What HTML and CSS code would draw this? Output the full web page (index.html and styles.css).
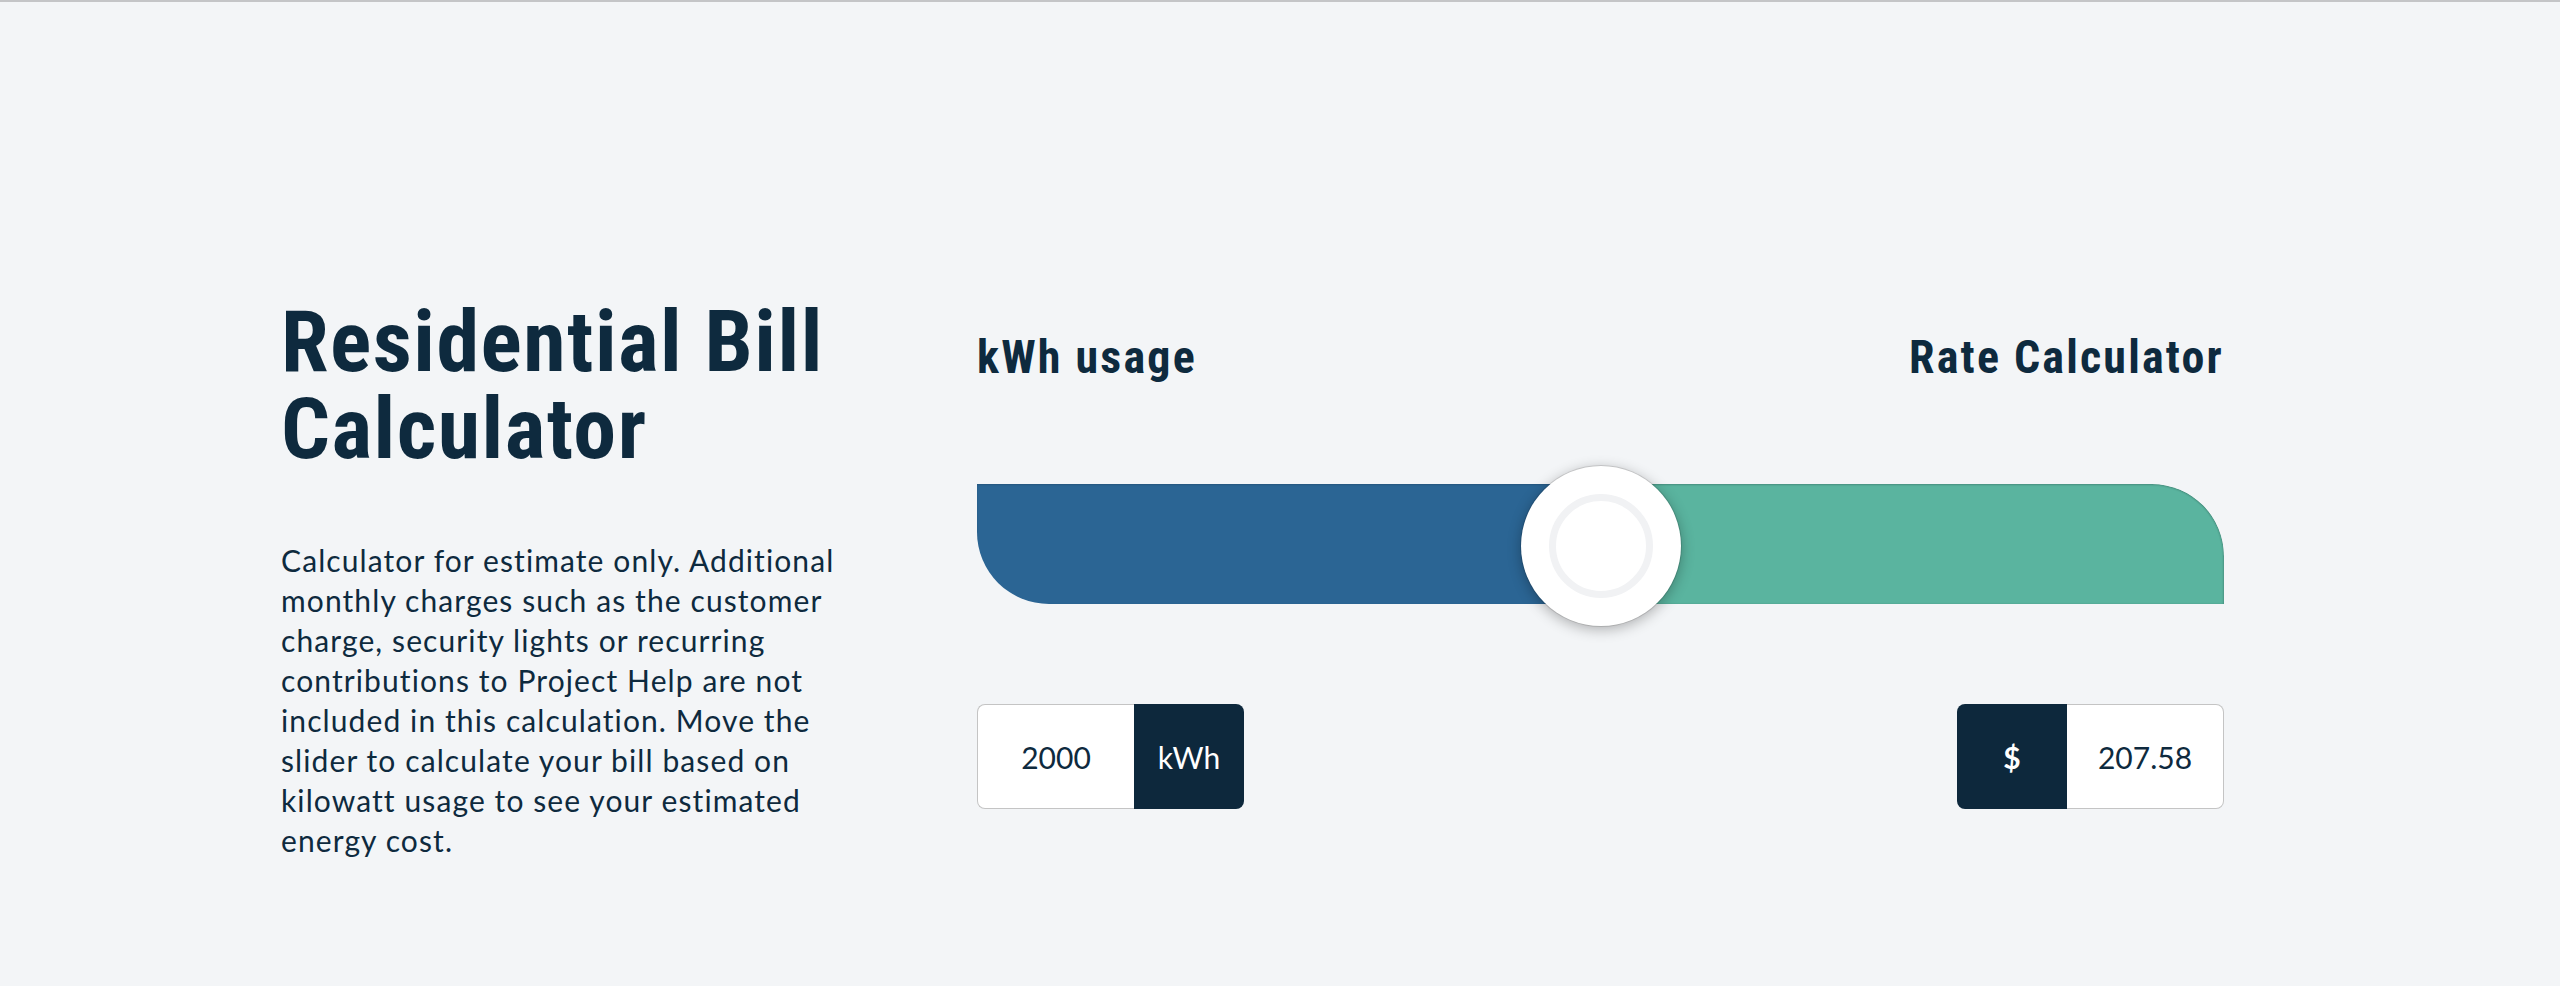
FILE: index.html
```html
<!DOCTYPE html>
<html lang="en">
<head>
<meta charset="utf-8">
<title>Residential Bill Calculator</title>
<link rel="stylesheet" href="styles.css">
</head>
<body>
<main class="page">
  <section class="calc">
    <div class="intro">
      <h1 class="title">Residential Bill Calculator</h1>
      <p class="desc">Calculator for estimate only. Additional monthly charges such as the customer charge, security lights or recurring contributions to Project Help are not included in this calculation. Move the slider to calculate your bill based on kilowatt usage to see your estimated energy cost.</p>
    </div>
    <div class="tool">
      <div class="labels">
        <h2 class="label">kWh usage</h2>
        <h2 class="label">Rate Calculator</h2>
      </div>
      <div class="slider">
        <div class="bar">
          <div class="bar-left" style="width:50%"></div>
          <div class="bar-right"></div>
        </div>
        <div class="thumb" style="left:50%"><span class="thumb-ring"></span></div>
      </div>
      <div class="fields">
        <div class="field">
          <span class="field-value">2000</span>
          <span class="field-unit">kWh</span>
        </div>
        <div class="field">
          <span class="field-unit field-unit-left">$</span>
          <span class="field-value field-value-right">207.58</span>
        </div>
      </div>
    </div>
  </section>
</main>
</body>
</html>
```

FILE: styles.css
```css
html, body {
  margin: 0;
  padding: 0;
}
body {
  background: #f3f5f7;
  color: #0e2a3e;
  font-family: Lato, "Open Sans", sans-serif;
  height: 986px;
  overflow: hidden;
  border-top: 2px solid #c4c5c7;
  box-sizing: border-box;
}
.page {
  padding: 296px 0 0 281px;
}
.calc {
  display: grid;
  grid-template-columns: 696px 1247px;
  align-items: start;
}
.intro {
  width: 590px;
}
.title {
  margin: 0;
  font-family: "Roboto Condensed", Roboto, sans-serif;
  font-weight: 700;
  font-size: 86px;
  line-height: 87px;
  letter-spacing: 1.5px;
}
.desc {
  margin: 68px 0 0;
  font-size: 30px;
  line-height: 40px;
  letter-spacing: 1.1px;
}
.tool {
  display: flex;
  flex-direction: column;
  padding-top: 34px;
}
.labels {
  display: flex;
  justify-content: space-between;
}
.label {
  margin: 0;
  font-family: "Roboto Condensed", Roboto, sans-serif;
  font-weight: 700;
  font-size: 46px;
  line-height: 50px;
  letter-spacing: 2.2px;
}
.slider {
  position: relative;
  margin-top: 102px;
  height: 120px;
}
.bar {
  display: flex;
  height: 120px;
  border-radius: 0 72px 0 72px;
  overflow: hidden;
}
.bar-left {
  background: #2b6594;
  box-shadow: inset 0 1px 2px rgba(0,0,0,.15);
}
.bar-right {
  flex: 1;
  background: #5ab49f;
  box-shadow: inset 0 1px 2px rgba(0,0,0,.18), inset -1px 0 2px rgba(0,0,0,.12);
  border-radius: 0 72px 0 0;
}
.thumb {
  position: absolute;
  top: -18px;
  width: 160px;
  height: 160px;
  margin-left: -80px;
  border-radius: 50%;
  background: #fff;
  box-shadow: 0 0 0 1px rgba(0,0,0,.12), 0 3px 14px rgba(0,0,0,.3);
  display: flex;
  align-items: center;
  justify-content: center;
}
.thumb-ring {
  width: 90px;
  height: 90px;
  border-radius: 50%;
  border: 7px solid #f1f2f4;
}
.fields {
  display: flex;
  justify-content: space-between;
  margin-top: 100px;
}
.field {
  display: flex;
  height: 105px;
  font-size: 30px;
}
.field-value {
  width: 157px;
  display: flex;
  align-items: center;
  justify-content: center;
  background: #fff;
  border: 1.5px solid #c4c4c4;
  border-right: none;
  border-radius: 8px 0 0 8px;
  box-sizing: border-box;
}
.field-value-right {
  border-right: 1.5px solid #c4c4c4;
  border-left: none;
  border-radius: 0 8px 8px 0;
}
.field-unit {
  width: 110px;
  display: flex;
  align-items: center;
  justify-content: center;
  background: #0d283c;
  color: #fff;
  border-radius: 0 8px 8px 0;
}
.field-unit-left {
  border-radius: 8px 0 0 8px;
  font-weight: 700;
}
```
